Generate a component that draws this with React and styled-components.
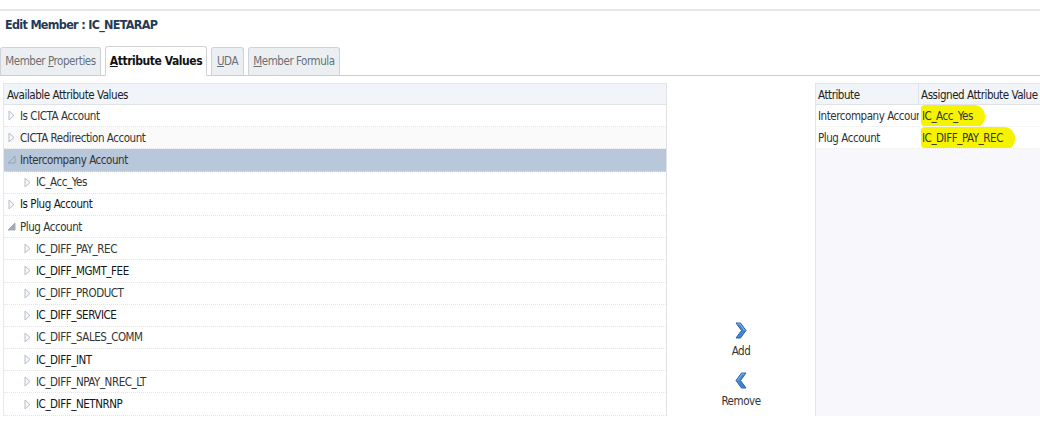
import React from "react";
import styled, { createGlobalStyle } from "styled-components";

const FONT = '"DejaVu Sans Condensed", "Liberation Sans", sans-serif';

const GlobalStyle = createGlobalStyle`
  html, body { margin: 0; padding: 0; background: #ffffff; }
  body { font-family: ${FONT}; font-size: 11.5px; letter-spacing: -0.45px; color: #333; }
  * { box-sizing: border-box; }
`;

const Page = styled.div`
  width: 1040px;
  height: 421px;
  overflow: hidden;
  display: flex;
  flex-direction: column;
`;

const TopRule = styled.div`
  margin-top: 9px;
  height: 2px;
  background: #e6e6e6;
`;

const Title = styled.h1`
  margin: 5px 0 0 0;
  padding-left: 5px;
  height: 18px;
  line-height: 18px;
  font-size: 12.5px;
  letter-spacing: -0.7px;
  font-weight: bold;
  color: #253a55;
`;

const TabBar = styled.div`
  margin-top: 12px;
  height: 30px;
  display: flex;
  align-items: flex-end;
  gap: 4px;
  border-bottom: 1px solid #c9cdd2;
`;

const Tab = styled.div`
  width: ${p => p.$w}px;
  height: ${p => (p.$active ? 30 : 29)}px;
  line-height: ${p => (p.$active ? 28 : 27)}px;
  margin-bottom: -1px;
  text-align: center;
  border: 1px solid #cfd3d8;
  border-bottom: ${p => (p.$active ? "1px solid #ffffff" : "1px solid #c9cdd2")};
  border-radius: 3px 3px 0 0;
  background: ${p => (p.$active ? "#ffffff" : "#eceff2")};
  color: ${p => (p.$active ? "#111" : "#6a6f75")};
  font-weight: ${p => (p.$active ? "bold" : "normal")};
  font-size: ${p => (p.$active ? 12 : 11.5)}px;
  white-space: nowrap;
`;

const Key = styled.span`
  text-decoration: underline;
`;

const Body = styled.div`
  margin-top: 7px;
  height: 333px;
  display: flex;
`;

const TreePanel = styled.div`
  margin-left: 3px;
  width: 664px;
  border-left: 1px solid #e4e7eb;
  border-right: 1px solid #dfe3e8;
  display: flex;
  flex-direction: column;
`;

const TreeHeader = styled.div`
  height: 22px;
  line-height: 22px;
  padding-left: 3px;
  background: #f1f4f8;
  border-top: 1px solid #e3e7ec;
  border-bottom: 1px solid #dfe3e8;
  color: #222;
`;

const Row = styled.div`
  height: 22.2px;
  display: flex;
  align-items: center;
  padding-left: ${p => 3 + p.$level * 16}px;
  background: ${p => (p.$selected ? "#b8c7da" : p.$alt ? "#fafafa" : "#ffffff")};
  border-bottom: 1px dotted #e4e4e4;
  color: ${p => (p.$dark ? "#151515" : "#333")};
  white-space: nowrap;
`;

const Disclosure = styled.span`
  width: 9px;
  height: 12px;
  margin-right: 4px;
  display: inline-flex;
  align-items: center;
  justify-content: center;
  flex: none;
`;

const Middle = styled.div`
  flex: 1;
  display: flex;
  flex-direction: column;
  align-items: center;
  justify-content: flex-end;
  padding-bottom: 7px;
  gap: 13px;
`;

const ShuttleButton = styled.div`
  display: flex;
  flex-direction: column;
  align-items: center;
  color: #333;
  line-height: 16px;
  gap: 4px;
`;

const AssignedPanel = styled.div`
  width: 225px;
  border-left: 1px solid #e2e5ea;
  background: #f8f8fc;
  display: flex;
  flex-direction: column;
`;

const Grid = styled.div`
  display: grid;
  grid-template-columns: 103px 1fr;
  background: #ffffff;
`;

const HeadCell = styled.div`
  height: 22px;
  line-height: 22px;
  padding-left: 2px;
  background: #f1f4f8;
  border-top: 1px solid #e3e7ec;
  border-bottom: 1px solid #dfe3e8;
  border-right: ${p => (p.$first ? "1px solid #dfe3e8" : "none")};
  color: #222;
  white-space: nowrap;
  overflow: hidden;
`;

const Cell = styled.div`
  height: 22px;
  display: flex;
  align-items: center;
  padding-left: 2px;
  border-bottom: 1px dotted #ececec;
  color: #333;
  white-space: nowrap;
  overflow: hidden;
`;

const Clip = styled.span`
  display: block;
  overflow: hidden;
  width: 100%;
`;

const Marked = styled.span`
  background: #f6f300;
  padding: 4px 12px 4px 1px;
  border-radius: 4px 11px 9px 5px;
  color: #333;
`;

const Collapsed = () => (
  <svg width="7" height="11" viewBox="0 0 7 11">
    <path d="M1 1 L6 5.5 L1 10 Z" fill="#f4f6f9" stroke="#b4bfcc" strokeWidth="1" strokeLinejoin="round" />
  </svg>
);

const ExpandedOpen = () => (
  <svg width="9" height="9" viewBox="0 0 9 9">
    <path d="M8 1 L8 8 L1 8 Z" fill="none" stroke="#98a4b2" strokeWidth="1" strokeLinejoin="round" />
  </svg>
);

const ExpandedFilled = () => (
  <svg width="9" height="9" viewBox="0 0 9 9">
    <path d="M8 1 L8 8 L1 8 Z" fill="#a5abb3" stroke="#a5abb3" strokeWidth="1" strokeLinejoin="round" />
  </svg>
);

const Chevron = ({ dir }) => (
  <svg width="12" height="17" viewBox="0 0 12 17">
    <path
      d={dir === "right"
        ? "M1 1 L5.5 1 L11 8.5 L5.5 16 L1 16 L6.5 8.5 Z"
        : "M11 1 L6.5 1 L1 8.5 L6.5 16 L11 16 L5.5 8.5 Z"}
      fill="#3f86d4"
      stroke="#2c62a6"
      strokeWidth="1"
      strokeLinejoin="round"
    />
    <path
      d={dir === "right" ? "M2.5 2 L5 2 L9.5 8.5" : "M9.5 2 L7 2 L2.5 8.5"}
      fill="none"
      stroke="#9cc6f0"
      strokeWidth="0.8"
    />
  </svg>
);

const treeRows = [
  { label: "Is CICTA Account", level: 0, icon: "collapsed" },
  { label: "CICTA Redirection Account", level: 0, icon: "collapsed", alt: true },
  { label: "Intercompany Account", level: 0, icon: "open", selected: true },
  { label: "IC_Acc_Yes", level: 1, icon: "collapsed" },
  { label: "Is Plug Account", level: 0, icon: "collapsed", dark: true },
  { label: "Plug Account", level: 0, icon: "filled" },
  { label: "IC_DIFF_PAY_REC", level: 1, icon: "collapsed" },
  { label: "IC_DIFF_MGMT_FEE", level: 1, icon: "collapsed", dark: true },
  { label: "IC_DIFF_PRODUCT", level: 1, icon: "collapsed" },
  { label: "IC_DIFF_SERVICE", level: 1, icon: "collapsed", dark: true },
  { label: "IC_DIFF_SALES_COMM", level: 1, icon: "collapsed" },
  { label: "IC_DIFF_INT", level: 1, icon: "collapsed", dark: true },
  { label: "IC_DIFF_NPAY_NREC_LT", level: 1, icon: "collapsed" },
  { label: "IC_DIFF_NETNRNP", level: 1, icon: "collapsed", dark: true },
];

const icons = {
  collapsed: <Collapsed />,
  open: <ExpandedOpen />,
  filled: <ExpandedFilled />,
};

const assigned = [
  { attribute: "Intercompany Account", value: "IC_Acc_Yes" },
  { attribute: "Plug Account", value: "IC_DIFF_PAY_REC" },
];

export default function App() {
  return (
    <Page>
      <GlobalStyle />
      <TopRule />
      <Title>Edit Member : IC_NETARAP</Title>
      <TabBar>
        <Tab $w={101}>Member <Key>P</Key>roperties</Tab>
        <Tab $w={102} $active><Key>A</Key>ttribute Values</Tab>
        <Tab $w={33}><Key>U</Key>DA</Tab>
        <Tab $w={92}><Key>M</Key>ember Formula</Tab>
      </TabBar>
      <Body>
        <TreePanel>
          <TreeHeader>Available Attribute Values</TreeHeader>
          {treeRows.map(r => (
            <Row key={r.label} $level={r.level} $selected={r.selected} $alt={r.alt} $dark={r.dark}>
              <Disclosure>{icons[r.icon]}</Disclosure>
              {r.label}
            </Row>
          ))}
        </TreePanel>
        <Middle>
          <ShuttleButton>
            <Chevron dir="right" />
            Add
          </ShuttleButton>
          <ShuttleButton>
            <Chevron dir="left" />
            Remove
          </ShuttleButton>
        </Middle>
        <AssignedPanel>
          <Grid>
            <HeadCell $first>Attribute</HeadCell>
            <HeadCell>Assigned Attribute Value</HeadCell>
            {assigned.map(a => (
              <React.Fragment key={a.attribute}>
                <Cell><Clip>{a.attribute}</Clip></Cell>
                <Cell><Marked>{a.value}</Marked></Cell>
              </React.Fragment>
            ))}
          </Grid>
        </AssignedPanel>
      </Body>
    </Page>
  );
}
